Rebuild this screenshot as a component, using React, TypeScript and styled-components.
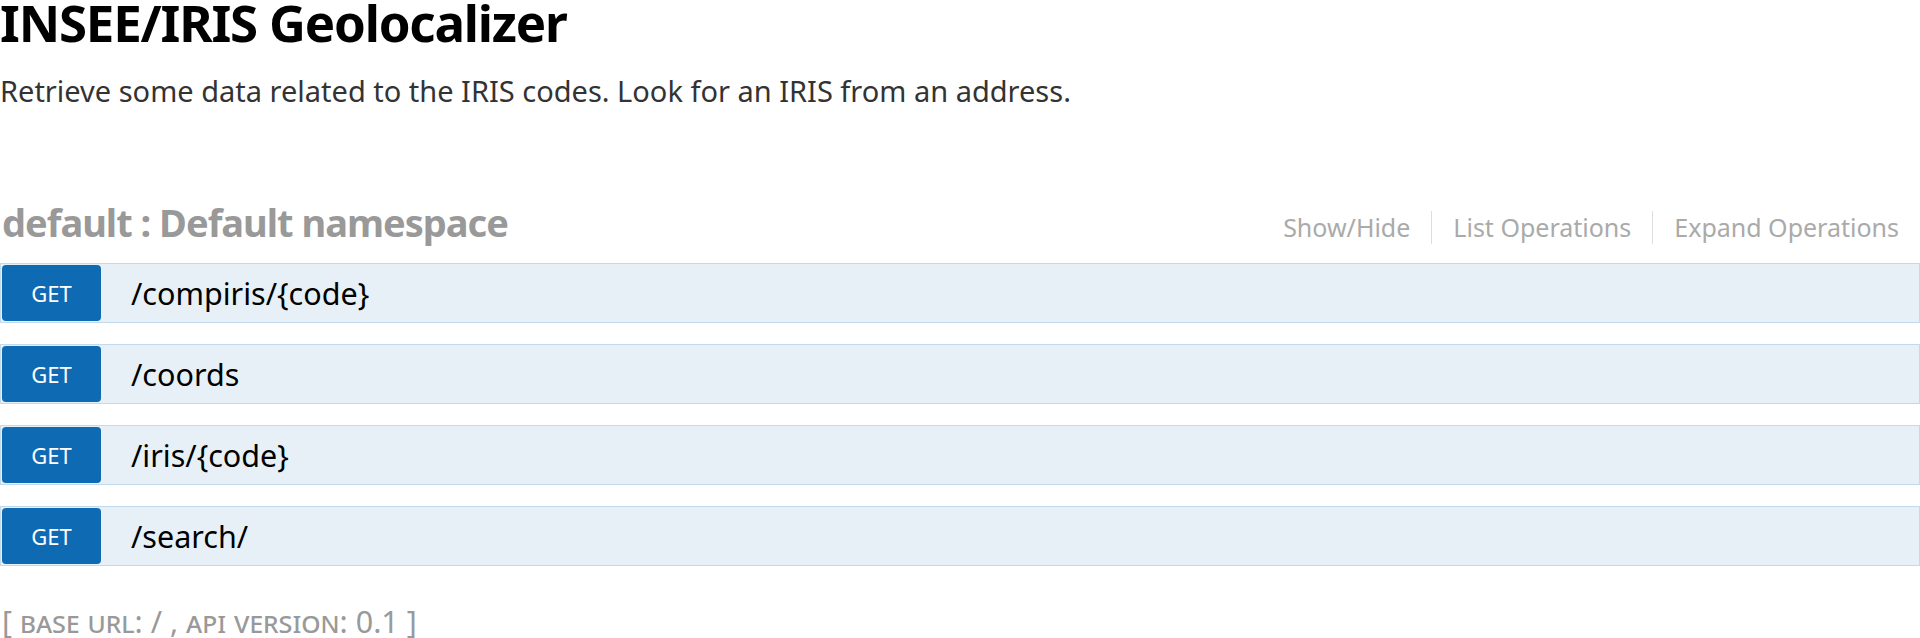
import React from 'react';
import styled, { createGlobalStyle } from 'styled-components';

const GlobalStyle = createGlobalStyle`
  html, body {
    margin: 0;
    padding: 0;
    background: #ffffff;
  }
  body {
    font-family: "Noto Sans", "Open Sans", sans-serif;
    color: #333333;
  }
`;

const Page = styled.div`
  width: 1920px;
  display: flex;
  flex-direction: column;
`;

const InfoBlock = styled.div`
  display: flex;
  flex-direction: column;
`;

const Title = styled.h1`
  margin: 0;
  font-size: 51px;
  line-height: 44px;
  font-weight: 700;
  letter-spacing: -1.2px;
  color: #000000;
`;

const Description = styled.p`
  margin: 27px 0 0;
  font-size: 29px;
  line-height: 40px;
  color: #333333;
`;

const Resource = styled.section`
  margin-top: 87px;
  display: flex;
  flex-direction: column;
`;

const ResourceHeading = styled.div`
  display: flex;
  align-items: baseline;
  justify-content: space-between;
  padding-left: 2px;
  margin-bottom: 17px;
`;

const ResourceName = styled.h2`
  margin: 0;
  font-size: 38px;
  line-height: 48px;
  font-weight: 700;
  letter-spacing: -1px;
  color: #999999;
`;

const Options = styled.ul`
  display: flex;
  margin: 0;
  padding: 0;
  list-style: none;
`;

const Option = styled.li<{ last?: boolean }>`
  font-size: 25px;
  line-height: 33px;
  padding: 0 21px;
  color: #aaaaaa;
  border-right: ${p => (p.last ? 'none' : '1px solid #dddddd')};
`;

const Endpoints = styled.div`
  display: flex;
  flex-direction: column;
  gap: 21px;
`;

const EndpointRow = styled.div`
  display: flex;
  align-items: center;
  padding: 1px;
  background: #e7f0f7;
  border: 1px solid #c3d9ec;
`;

const MethodBadge = styled.span`
  display: flex;
  align-items: center;
  justify-content: center;
  width: 99px;
  height: 56px;
  border-radius: 4px;
  background: #0f6ab4;
  color: #ffffff;
  font-size: 22px;
  text-transform: uppercase;
`;

const Path = styled.span`
  padding-left: 30px;
  font-size: 30.5px;
  color: #000000;
`;

const Footer = styled.h4`
  margin: 35px 0 0;
  padding-left: 2px;
  font-size: 30.5px;
  line-height: 40px;
  font-weight: 400;
  color: #999999;
`;

const SmallCaps = styled.span`
  font-variant: small-caps;
`;

const endpoints = ['/compiris/{code}', '/coords', '/iris/{code}', '/search/'];

export default function App() {
  return (
    <Page>
      <GlobalStyle />
      <InfoBlock>
        <Title>INSEE/IRIS Geolocalizer</Title>
        <Description>
          Retrieve some data related to the IRIS codes. Look for an IRIS from an address.
        </Description>
      </InfoBlock>

      <Resource>
        <ResourceHeading>
          <ResourceName>default : Default namespace</ResourceName>
          <Options>
            <Option>Show/Hide</Option>
            <Option>List Operations</Option>
            <Option last>Expand Operations</Option>
          </Options>
        </ResourceHeading>

        <Endpoints>
          {endpoints.map(path => (
            <EndpointRow key={path}>
              <MethodBadge>get</MethodBadge>
              <Path>{path}</Path>
            </EndpointRow>
          ))}
        </Endpoints>
      </Resource>

      <Footer>
        [ <SmallCaps>base url</SmallCaps>: / , <SmallCaps>api version</SmallCaps>: 0.1 ]
      </Footer>
    </Page>
  );
}
